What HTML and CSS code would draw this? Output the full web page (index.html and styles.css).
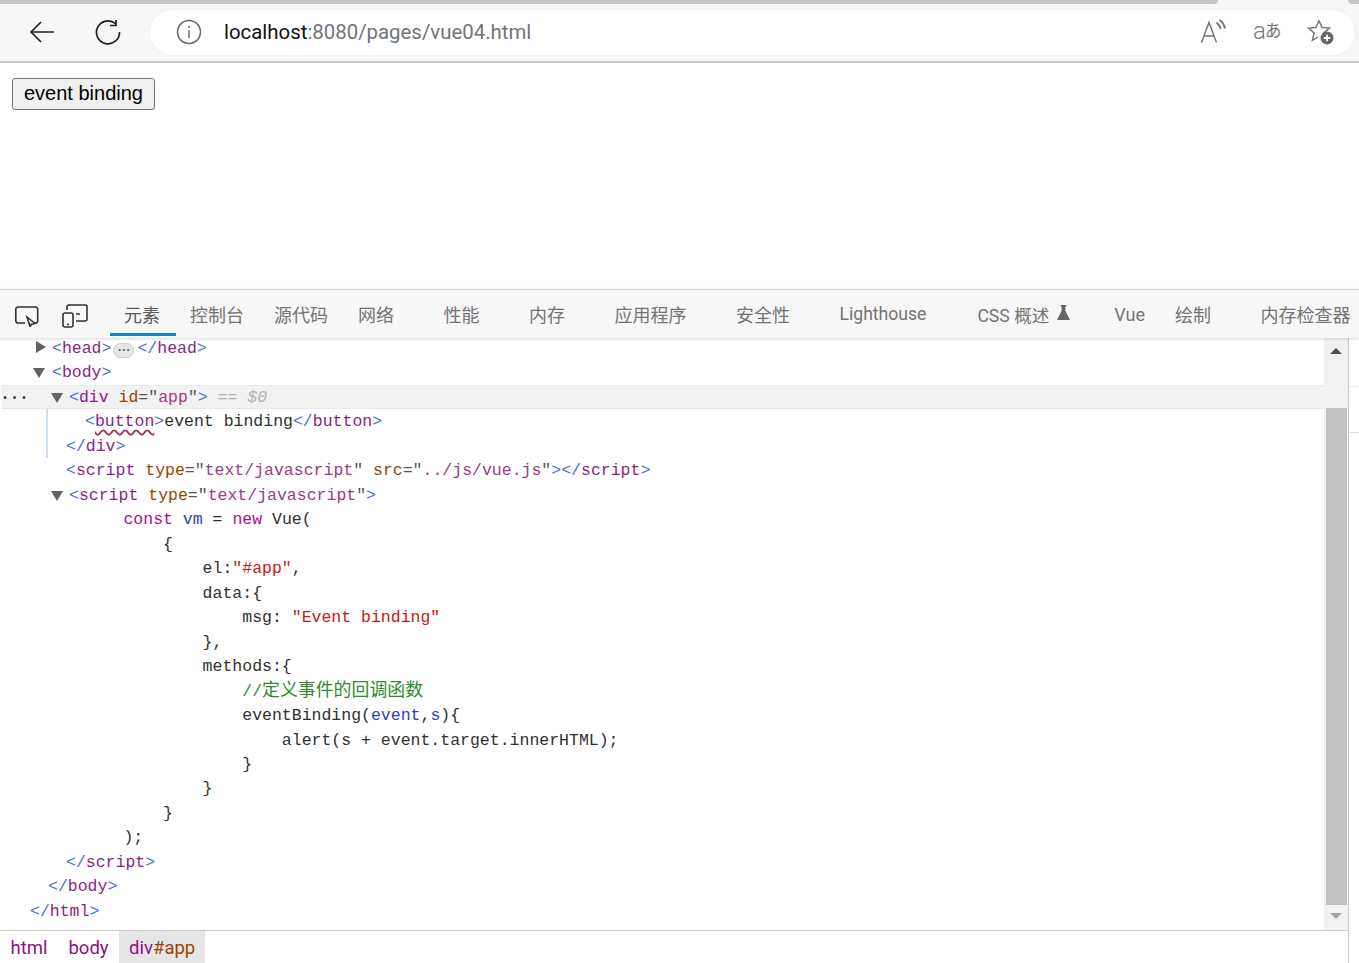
FILE: index.html
```html
<!DOCTYPE html>
<html lang="zh-CN">

<head>
    <meta charset="UTF-8">
    <title>vue04</title>
    <link rel="stylesheet" href="styles.css">
</head>

<body>
    <div class="toolbar">
        <div class="top-strip"></div>
        <div class="top-strip right"></div>
        <svg class="nav-icon back" width="26" height="24" viewBox="0 0 26 24">
            <path d="M25 12H2M12 2 2 12l10 10" />
        </svg>
        <svg class="nav-icon reload" width="26" height="26" viewBox="0 0 26 26">
            <path d="M20.500 4.600A11.500 11.500 0 1 0 24.500 13M21 1v5.500h-6" />
        </svg>
        <div class="address">
            <svg class="info-icon" width="26" height="26" viewBox="0 0 26 26">
                <circle cx="13" cy="13" r="11.500" />
                <path d="M13 11.500V19M13 7v2" />
            </svg>
            <span class="url"><span class="host">localhost</span>:8080/pages/vue04.html</span>
            <svg class="addr-icon read" width="26" height="26" viewBox="0 0 26 26">
                <path d="M1.500 23.500 9 3.500l7.500 20M4 17h10" />
                <path class="waves" d="M16.500 3.500c2.300 1.800 3.600 3.800 4.200 6.500M19.500 1c3 2 4.800 5 5.400 8.500" />
            </svg>
            <span class="translate"><span class="tr-a">a</span><span class="tr-ja">あ</span></span>
            <svg class="addr-icon star" width="28" height="28" viewBox="0 0 28 28">
                <path d="M12 2.500 15 9.500l7.500.6-5.700 4.900 1.700 1M12 2.500 9 9.500l-7.500.6 5.700 4.900-1.800 7.300 5.600-3.200" />
                <circle class="star-dot" cx="20" cy="20" r="6.500" />
                <path class="star-plus" d="M20 16.800v6.400M16.800 20h6.400" />
            </svg>
        </div>
    </div>

    <div class="page">
        <button class="demo-btn">event binding</button>
    </div>

    <div class="devtools">
        <div class="tabbar">
            <svg class="tool-icon inspect" width="26" height="26" viewBox="0 0 26 26">
                <path d="M10 22H3a2.200 2.200 0 0 1-2.200-2.200V8.200A2.200 2.200 0 0 1 3 6h17.500a2.200 2.200 0 0 1 2.200 2.200v11.600a2.200 2.200 0 0 1-2.200 2.200H19" />
                <path class="cursor" d="M12 16l8 6.500-3.500.7-1.500 2.300z" />
            </svg>
            <svg class="tool-icon device" width="26" height="28" viewBox="0 0 26 28">
                <path d="M5 10V7a2 2 0 0 1 2-2h16a2 2 0 0 1 2 2v12a2 2 0 0 1-2 2H14M14 14h4" />
                <rect x="1" y="13" width="10" height="14" rx="2" />
                <path d="M5 24.500h2" />
            </svg>
            <div class="tab active">元素</div>
            <div class="tab">控制台</div>
            <div class="tab">源代码</div>
            <div class="tab wide">网络</div>
            <div class="tab wide">性能</div>
            <div class="tab wide">内存</div>
            <div class="tab wide">应用程序</div>
            <div class="tab wide">安全性</div>
            <div class="tab latin">Lighthouse</div>
            <div class="tab css-tab">CSS 概述
                <svg class="flask" width="13" height="15" viewBox="0 0 14 16">
                    <path d="M4 0h6v1.500H9V6l5 10H0L5 6V1.500H4z" />
                </svg>
            </div>
            <div class="tab">Vue</div>
            <div class="tab wide">绘制</div>
            <div class="tab">内存检查器</div>
        </div>

        <div class="panel">
            <div class="main">
                <div class="tree-wrap">
                    <div class="tree">
                        <div class="line ind-52"><i class="arrow right"></i><b>&lt;</b><u>head</u><b>&gt;</b><span class="dots-pill">•••</span><b>&lt;/</b><u>head</u><b>&gt;</b></div>
                        <div class="line ind-52"><i class="arrow down"></i><b>&lt;</b><u>body</u><b>&gt;</b></div>
                        <div class="line ind-69 selected"><span class="more">•••</span><i class="arrow down"></i><b>&lt;</b><u>div</u> <em>id</em><span class="val">="<u>app</u>"</span><b>&gt;</b> <span class="eq">== $0</span></div>
                        <div class="guide"></div>
                        <div class="line ind-85"><b>&lt;</b><u class="wavy">button</u><b>&gt;</b>event binding<b>&lt;/</b><u>button</u><b>&gt;</b></div>
                        <div class="line ind-66"><b>&lt;/</b><u>div</u><b>&gt;</b></div>
                        <div class="line ind-66"><b>&lt;</b><u>script</u> <em>type</em><span class="val">="<u>text/javascript</u>"</span> <em>src</em><span class="val">="<u>../js/vue.js</u>"</span><b>&gt;&lt;/</b><u>script</u><b>&gt;</b></div>
                        <div class="line ind-69"><i class="arrow down"></i><b>&lt;</b><u>script</u> <em>type</em><span class="val">="<u>text/javascript</u>"</span><b>&gt;</b></div>
                        <div class="line ind-64">      <span class="kw">const</span> <span class="var">vm</span> = <span class="kw">new</span> Vue(</div>
                        <div class="line ind-64">          {</div>
                        <div class="line ind-64">              el:<span class="str">"#app"</span>,</div>
                        <div class="line ind-64">              data:{</div>
                        <div class="line ind-64">                  msg: <span class="str">"Event binding"</span></div>
                        <div class="line ind-64">              },</div>
                        <div class="line ind-64">              methods:{</div>
                        <div class="line ind-64">                  <span class="cmt">//<span class="cjk">定义事件的回调函数</span></span></div>
                        <div class="line ind-64">                  eventBinding(<span class="var">event</span>,<span class="var">s</span>){</div>
                        <div class="line ind-64">                      alert(s + event.target.innerHTML);</div>
                        <div class="line ind-64">                  }</div>
                        <div class="line ind-64">              }</div>
                        <div class="line ind-64">          }</div>
                        <div class="line ind-64">      );</div>
                        <div class="line ind-66"><b>&lt;/</b><u>script</u><b>&gt;</b></div>
                        <div class="line ind-48"><b>&lt;/</b><u>body</u><b>&gt;</b></div>
                        <div class="line ind-30"><b>&lt;/</b><u>html</u><b>&gt;</b></div>
                    </div>
                    <div class="scrollbar">
                        <i class="sb-arrow up"></i>
                        <div class="sb-thumb"></div>
                        <i class="sb-arrow dn"></i>
                    </div>
                </div>
                <div class="crumbs">
                    <span class="crumb"><u>html</u></span>
                    <span class="crumb"><u>body</u></span>
                    <span class="crumb current"><u>div</u><em>#app</em></span>
                </div>
            </div>
            <div class="side">
                <div class="side-row first"></div>
                <div class="side-row"></div>
            </div>
        </div>
    </div>
</body>

</html>
```

FILE: styles.css
```css
html,
body {
    margin: 0;
    padding: 0;
    height: 963px;
    overflow: hidden;
    background-color: #fff;
}

body {
    display: flex;
    flex-direction: column;
    font-family: Roboto, "Noto Sans CJK SC", sans-serif;
}

/* browser toolbar */
.toolbar {
    position: relative;
    display: flex;
    align-items: center;
    height: 63px;
    padding-left: 29px;
    padding-top: 3px;
    box-sizing: border-box;
    flex-shrink: 0;
    background-color: #f7f7f7;
    border-bottom: 2px solid #c4c4c4;
}

.top-strip {
    position: absolute;
    left: 0;
    top: 0;
    width: 1218px;
    height: 4px;
    background-color: #c6c6c6;
    border-bottom-right-radius: 4px;
}

.top-strip.right {
    left: 1348px;
    width: 11px;
    border-radius: 0 0 0 4px;
}

.nav-icon {
    fill: none;
    stroke: #222;
    stroke-width: 1.7;
    flex-shrink: 0;
}

.back {
    margin-right: 40px;
}

.reload {
    margin-right: 29px;
}

.address {
    display: flex;
    align-items: center;
    flex: 1;
    height: 45px;
    margin-right: 4px;
    padding-left: 26px;
    background-color: #fff;
    border-radius: 23px;
    box-shadow: 0 0 3px rgba(0, 0, 0, 0.06);
}

.info-icon {
    fill: none;
    stroke: #666;
    stroke-width: 1.5;
    margin-right: 22px;
    flex-shrink: 0;
}

.url {
    font-size: 20.400px;
    color: #70757a;
    flex: 1;
}

.host {
    color: #111;
}

.addr-icon {
    fill: none;
    stroke: #777;
    stroke-width: 1.5;
    flex-shrink: 0;
}

.waves {
    stroke-width: 2;
}

.read {
    margin-right: 27px;
}

.translate {
    display: flex;
    align-items: center;
    width: 28px;
    margin-right: 26px;
    white-space: nowrap;
    color: #777;
}

.tr-a {
    font-size: 24px;
    font-weight: 300;
    line-height: 1;
    margin-top: -3px;
}

.tr-ja {
    font-size: 16.500px;
    line-height: 1;
    margin-left: -1px;
}

.star {
    margin-right: 20px;
}

.star-dot {
    fill: #666;
    stroke: none;
}

.star-plus {
    stroke: #fff;
    stroke-width: 1.800;
}

/* page content */
.page {
    height: 226px;
    flex-shrink: 0;
    padding: 15px 12px 0;
    box-sizing: border-box;
}

.demo-btn {
    height: 32px;
    width: 143px;
    padding: 0 0 2px;
    font-family: "Liberation Sans", Arial, sans-serif;
    font-size: 20px;
    color: #000;
    background-color: #efefef;
    border: 1px solid #767676;
    border-radius: 3px;
}

/* devtools */
.devtools {
    flex: 1;
    display: flex;
    flex-direction: column;
    min-height: 0;
}

.tabbar {
    position: relative;
    z-index: 2;
    display: flex;
    align-items: stretch;
    flex-shrink: 0;
    height: 49px;
    box-sizing: border-box;
    padding-left: 15px;
    white-space: nowrap;
    background-color: #f7f7f7;
    border-top: 1px solid #ccd0d6;
    box-shadow: 0 1px 3px rgba(0, 0, 0, 0.15);
}

.tool-icon {
    fill: none;
    stroke: #333;
    stroke-width: 1.600;
    align-self: center;
    flex-shrink: 0;
}

.cursor {
    fill: #fff;
}

.inspect {
    margin-right: 21px;
}

.device {
    margin-right: 22px;
}

.tab {
    display: flex;
    align-items: center;
    gap: 8px;
    font-size: 18px;
    color: #747474;
    margin-right: 30px;
    box-sizing: border-box;
}

.tab.wide {
    margin-right: 49.500px;
}

.tab.latin {
    font-size: 17.600px;
    margin-right: 51px;
}

.tab.active {
    align-self: flex-start;
    color: #5a5a5a;
    padding: 5px 16px 0 14px;
    margin-right: 14px;
    height: 46px;
    border-bottom: 3px solid #1a7fd4;
}

.css-tab {
    font-size: 17.600px;
    margin-right: 44px;
}

.flask {
    fill: #666;
    margin-bottom: 4px;
}

.panel {
    flex: 1;
    display: flex;
    min-height: 0;
}

.main {
    width: 1348px;
    display: flex;
    flex-direction: column;
    flex-shrink: 0;
    border-right: 1px solid #c8ccd2;
}

.tree-wrap {
    flex: 1;
    display: flex;
    min-height: 0;
}

.tree {
    position: relative;
    flex: 1;
    margin-top: -2px;
    font-family: "Liberation Mono", monospace;
    font-size: 16.500px;
    color: #303030;
}

.line {
    position: relative;
    height: 24.480px;
    line-height: 26.480px;
    white-space: pre;
    box-sizing: border-box;
}

.ind-30 {
    padding-left: 30px;
}

.ind-48 {
    padding-left: 48px;
}

.ind-52 {
    padding-left: 52px;
}

.ind-64 {
    padding-left: 64px;
}

.ind-66 {
    padding-left: 66px;
}

.ind-69 {
    padding-left: 69px;
}

.ind-85 {
    padding-left: 85px;
}

.line b {
    font-weight: normal;
    color: #4a6fd1;
}

.line u {
    text-decoration: none;
    color: #8a1f8a;
}

.line em {
    font-style: normal;
    color: #994500;
}

.val {
    color: #555;
}

.line .val u {
    color: #a03a80;
}

.selected {
    margin-left: 2px;
    padding-left: 67px;
    background-color: #f1f1f1;
    box-shadow: inset 0 1px 0 #e8e8e8, inset 0 -1px 0 #e8e8e8;
}

.more {
    position: absolute;
    left: 0;
    top: 1px;
    font-size: 10px;
    color: #333;
    letter-spacing: 3.500px;
}

.eq {
    color: #b3b3b3;
    font-style: italic;
}

.line u.wavy {
    text-decoration: underline wavy #a0365a 1.500px;
    text-underline-offset: 3px;
}

.guide {
    position: absolute;
    left: 46px;
    top: 73px;
    width: 2px;
    height: 49px;
    background-color: #cfdff5;
}

.arrow {
    position: absolute;
    width: 0;
    height: 0;
}

.arrow.right {
    left: 36px;
    top: 5px;
    border-left: 10px solid #5f6368;
    border-top: 6px solid transparent;
    border-bottom: 6px solid transparent;
}

.arrow.down {
    top: 8px;
    border-top: 10px solid #5f6368;
    border-left: 6.500px solid transparent;
    border-right: 6.500px solid transparent;
}

.ind-52 .arrow.down {
    left: 33px;
}

.ind-69 .arrow.down {
    left: 51px;
}

.selected .arrow.down {
    left: 49px;
}

.dots-pill {
    display: inline-block;
    width: 21px;
    height: 15px;
    margin: 0 3px 0 2px;
    line-height: 13px;
    text-align: center;
    vertical-align: 1px;
    font-size: 7px;
    color: #555;
    background-color: #e6e6e6;
    border: 1px solid #ccc;
    border-radius: 8px;
    box-sizing: border-box;
}

.kw {
    color: #aa0d91;
}

.var {
    color: #2f3fb4;
}

.str {
    color: #c41a16;
}

.cmt {
    color: #2e8b2e;
}

.cjk {
    font-family: "Noto Sans CJK SC", sans-serif;
    font-size: 17.900px;
    line-height: 1;
}

.scrollbar {
    width: 24px;
    display: flex;
    flex-direction: column;
    align-items: center;
    flex-shrink: 0;
    background-color: #f1f1f1;
}

.sb-arrow {
    width: 0;
    height: 0;
    border-left: 6px solid transparent;
    border-right: 6px solid transparent;
}

.sb-arrow.up {
    margin-top: 10px;
    border-bottom: 6px solid #505050;
}

.sb-arrow.dn {
    margin-top: 8px;
    border-top: 6px solid #a3a3a3;
}

.sb-thumb {
    width: 21px;
    height: 497px;
    margin-top: 54px;
    background-color: #c1c1c1;
}

.crumbs {
    display: flex;
    flex-shrink: 0;
    height: 33px;
    box-sizing: border-box;
    font-size: 18.500px;
    border-top: 1px solid #ccc;
    line-height: 34px;
}

.crumb {
    padding: 0 10.500px;
}

.crumb u {
    text-decoration: none;
    color: #881280;
}

.crumb em {
    font-style: normal;
    color: #994500;
}

.crumb.current {
    padding: 0 10px;
    background-color: #e6e6e6;
}

.side {
    flex: 1;
    padding-top: 48px;
}

.side-row {
    height: 46px;
    border-bottom: 1px solid #e0e0e0;
    box-sizing: border-box;
}

.side-row.first {
    height: 1px;
    border-bottom-color: #eee;
}
```
